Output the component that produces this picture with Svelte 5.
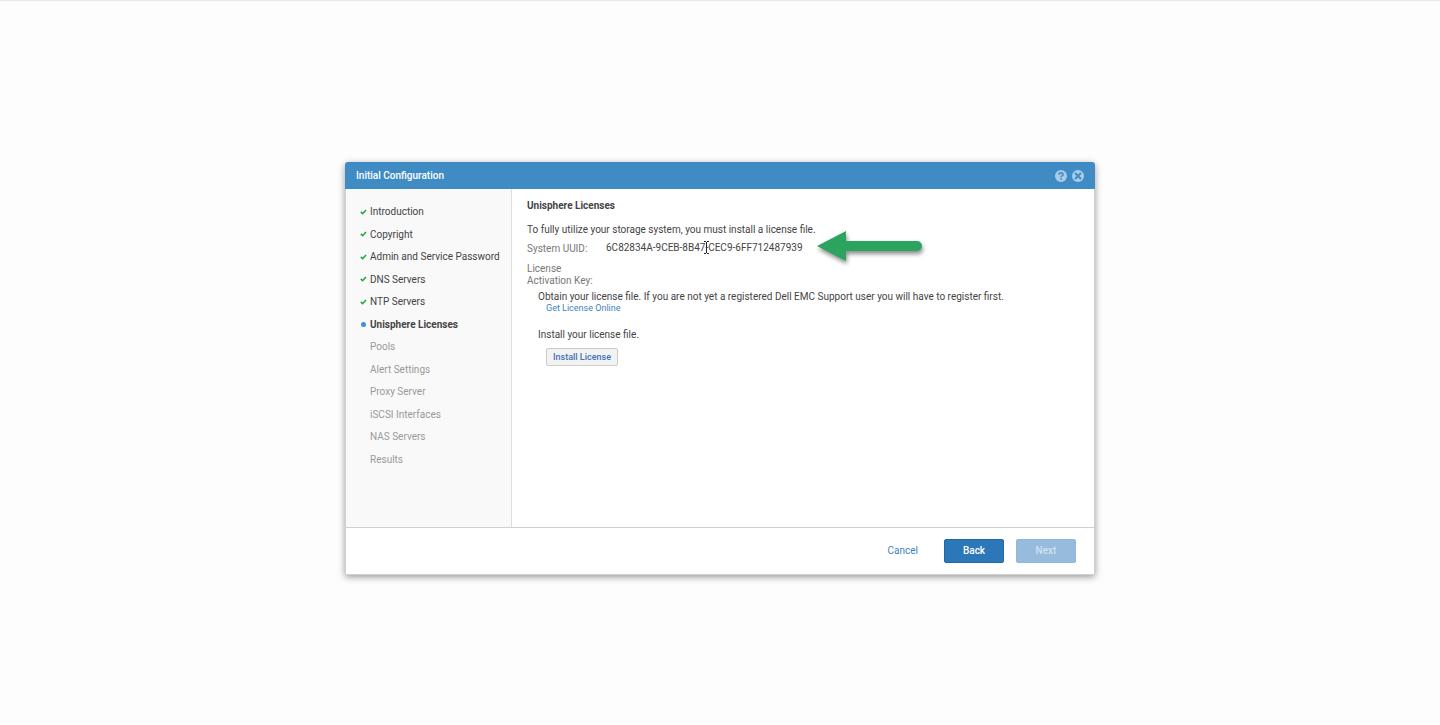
<script>
  const steps = [
    { name: 'Introduction', state: 'done' },
    { name: 'Copyright', state: 'done' },
    { name: 'Admin and Service Password', state: 'done' },
    { name: 'DNS Servers', state: 'done' },
    { name: 'NTP Servers', state: 'done' },
    { name: 'Unisphere Licenses', state: 'current' },
    { name: 'Pools', state: 'todo' },
    { name: 'Alert Settings', state: 'todo' },
    { name: 'Proxy Server', state: 'todo' },
    { name: 'iSCSI Interfaces', state: 'todo' },
    { name: 'NAS Servers', state: 'todo' },
    { name: 'Results', state: 'todo' }
  ];
</script>

<div class="page">
  <div class="dialog" role="dialog" aria-labelledby="dialog-title">
    <header>
      <h1 id="dialog-title">Initial Configuration</h1>
      <button class="icon-btn" aria-label="Help">
        <svg viewBox="0 0 12 12" width="12" height="12">
          <circle cx="6" cy="6" r="6" fill="#a9cbe6" />
          <path d="M4 4.8C4 2.2 8 2.2 8 4.6C8 5.9 6 5.8 6 7.3M6 8.2V9.8" fill="none" stroke="#3f8cc4" stroke-width="1.6" />
        </svg>
      </button>
      <button class="icon-btn" aria-label="Close">
        <svg viewBox="0 0 12 12" width="12" height="12">
          <circle cx="6" cy="6" r="6" fill="#a9cbe6" />
          <path d="M3 3L9 9M9 3L3 9" fill="none" stroke="#3f8cc4" stroke-width="1.8" />
        </svg>
      </button>
    </header>

    <div class="body">
      <nav>
        <ol>
          {#each steps as step}
            <li class={step.state}>
              <span class="mark">
                {#if step.state === 'done'}
                  <svg viewBox="0 0 7 7" width="7" height="7">
                    <path d="M0.8 2.9L2.6 4.7L6 1" fill="none" stroke="#22a83a" stroke-width="1.6" />
                  </svg>
                {:else if step.state === 'current'}
                  <span class="dot"></span>
                {/if}
              </span>
              {step.name}
            </li>
          {/each}
        </ol>
      </nav>

      <main>
        <h2>Unisphere Licenses</h2>
        <p class="intro">To fully utilize your storage system, you must install a license file.</p>
        <dl>
          <dt>System UUID:</dt>
          <dd>
            <span class="uuid">
              6C82834A-9CEB-8B47-CEC9-6FF712487939
              <svg class="cursor" viewBox="0 0 7 13" width="7" height="13">
                <path d="M1 0.5H3M4 0.5H6M3.5 1V12M1 12.5H3M4 12.5H6" fill="none" stroke="#222" />
              </svg>
            </span>
            <svg class="arrow" viewBox="0 0 112 40" width="112" height="40">
              <path d="M2 16L31 1V11H102A5 5 0 0 1 102 21H31V31Z" fill="#2ca35f" />
            </svg>
          </dd>
          <dt>License Activation Key:</dt>
          <dd></dd>
        </dl>
        <section>
          <p>Obtain your license file. If you are not yet a registered Dell EMC Support user you will have to register first.</p>
          <a href="#license">Get License Online</a>
        </section>
        <section>
          <p>Install your license file.</p>
          <button class="install">Install License</button>
        </section>
      </main>
    </div>

    <footer>
      <button class="cancel">Cancel</button>
      <button class="primary">Back</button>
      <button class="primary" disabled>Next</button>
    </footer>
  </div>
</div>

<style>
  :global(body) {
    background: #fdfdfd;
  }

  .page {
    box-sizing: border-box;
    min-height: 100vh;
    padding: 11px 16px 0;
    border-top: 1px solid #e8e8e8;
    display: flex;
    align-items: center;
    justify-content: center;
    font-family: Roboto, sans-serif;
    font-size: 10px;
    line-height: 12px;
    color: #444;
  }

  .dialog {
    width: 100%;
    max-width: 750px;
    border-radius: 3px 3px 0 0;
    background: #fff;
    box-shadow: 0 2px 7px rgba(0, 0, 0, 0.4);
  }

  h1,
  h2,
  p,
  dl,
  dd,
  ol {
    margin: 0;
    padding: 0;
  }

  button {
    font: inherit;
    padding: 0;
    border: none;
    background: none;
    cursor: pointer;
  }

  header {
    display: flex;
    align-items: center;
    gap: 5px;
    height: 27px;
    padding: 0 11px;
    border-radius: 3px 3px 0 0;
    background: #3f8cc4;
  }

  h1 {
    flex: 1;
    font-size: 10px;
    font-weight: 500;
    color: #fff;
  }

  .icon-btn {
    display: flex;
  }

  .body {
    display: flex;
    min-height: 338px;
    border: solid #d0d0d0;
    border-width: 0 1px 1px;
  }

  nav {
    box-sizing: border-box;
    flex: 0 0 166px;
    padding: 12px 0 0 14px;
    border-right: 1px solid #ddd;
    background: #f9f9f9;
  }

  ol {
    display: grid;
    grid-auto-rows: 1fr;
    height: 270px;
    list-style: none;
  }

  li {
    display: flex;
    align-items: center;
    gap: 3px;
  }

  .mark {
    display: flex;
    justify-content: center;
    width: 7px;
  }

  .dot {
    width: 5px;
    height: 5px;
    border-radius: 50%;
    background: #3f8ee0;
  }

  .current {
    font-weight: 700;
  }

  .todo {
    color: #999;
  }

  main {
    flex: 1;
    padding: 11px 15px;
  }

  h2 {
    font-size: 10px;
    font-weight: 700;
  }

  .intro {
    margin-top: 12px;
  }

  dl {
    display: grid;
    grid-template-columns: 67px 1fr;
    gap: 7px 12px;
    margin-top: 6px;
  }

  dt {
    margin-top: 1px;
    color: #777;
  }

  dd {
    display: flex;
    align-items: flex-start;
    gap: 12px;
    height: 12px;
  }

  .uuid {
    position: relative;
  }

  .cursor {
    position: absolute;
    left: 97px;
    top: -1px;
  }

  .arrow {
    flex: none;
    margin-top: -12px;
    filter: drop-shadow(1px 3px 2px rgba(0, 0, 0, 0.45));
  }

  section {
    padding: 4px 0 11px 11px;
  }

  a {
    display: block;
    width: fit-content;
    margin-left: 8px;
    font-size: 9px;
    line-height: 11px;
    color: #3f7fc0;
    text-decoration: none;
  }

  .install {
    margin: 7px 0 0 8px;
    padding: 2px 6px;
    border: 1px solid #ccc;
    border-radius: 2px;
    background: #f2f2f2;
    font-size: 9px;
    font-weight: 500;
    color: #3f74b5;
  }

  footer {
    display: flex;
    align-items: center;
    justify-content: flex-end;
    gap: 12px;
    height: 46px;
    padding: 0 18px;
    border: solid #d0d0d0;
    border-width: 0 1px 1px;
  }

  .cancel {
    margin-right: 14px;
    color: #3f7fc0;
  }

  .primary {
    width: 60px;
    height: 24px;
    border: 1px solid #2368a5;
    border-radius: 2px;
    background: #2b77b8;
    font-weight: 500;
    color: #fff;
  }

  .primary:disabled {
    border-color: #91b7d9;
    background: #97bbdc;
    color: #d0e2f2;
  }
</style>
